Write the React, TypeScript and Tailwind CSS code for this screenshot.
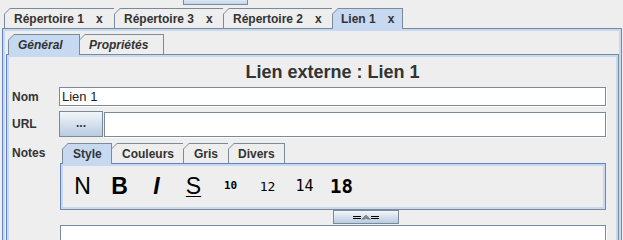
import React from 'react'

const SANS = "font-['Liberation_Sans',Arial,sans-serif]"
const MONO = "font-['DejaVu_Sans_Mono',monospace]"

function Corner() {
  return (
    <svg className="absolute -left-px -top-px" width="7" height="7" viewBox="0 0 7 7">
      <polygon points="0,0 6.5,0 0,6.5" fill="#eeeeee" />
      <line x1="0" y1="6.5" x2="6.5" y2="0" stroke="#7a8a99" strokeWidth="1" />
    </svg>
  )
}

function Tab({ label, sel, cls, italic, close }: { label: string; sel?: boolean; cls: string; italic?: boolean; close?: string }) {
  return (
    <div
      className={`relative -ml-px flex items-center border border-b-0 border-[#7a8a99] text-[12px] font-bold text-[#333333] ${
        sel ? 'z-10 -mb-px h-[21px] bg-[#c6d9f0]' : 'h-[20px] bg-[#eeeeee]'
      } ${italic ? 'italic' : ''} ${cls}`}
    >
      <Corner />
      <span>{label}</span>
      {close && <span className={`${close}`}>x</span>}
    </div>
  )
}

function Field({ cls, children }: { cls: string; children?: React.ReactNode }) {
  return (
    <div className={`flex items-center border border-[#7a8a99] bg-white shadow-[1px_1px_0_#ffffff] ${cls}`}>{children}</div>
  )
}

export default function App() {
  return (
    <div className={`relative h-[240px] w-[623px] overflow-hidden bg-[#eeeeee] ${SANS}`}>
      {/* strip above the tabs */}
      <div className="flex h-[6px]">
        <div className="ml-[183px] h-[5px] w-[65px] border-x border-b border-[#7a8a99] bg-linear-to-b from-[#dde8f3] to-[#c3d5e8]" />
      </div>

      {/* outer tabs */}
      <div className="ml-[5px] mt-[2px] flex items-end">
        <Tab label="Répertoire 1" cls="w-[111px] pl-[9px]" close="ml-[12px]" />
        <Tab label="Répertoire 3" cls="w-[110px] pl-[9px]" close="ml-[12px]" />
        <Tab label="Répertoire 2" cls="w-[110px] pl-[9px]" close="ml-[12px]" />
        <Tab label="Lien 1" sel cls="w-[71px] pl-[8px]" close="ml-[12px]" />
      </div>

      {/* outer content */}
      <div className="ml-[2px] w-[620px] border border-[#7a8a99] border-l-[#6382bf]">
        <div className="h-[260px] border-2 border-[#c6d9f0] pl-px">
          {/* inner tabs */}
          <div className="ml-[3px] mt-[3px] flex items-end">
            <Tab label="Général" sel italic cls="w-[72px] pl-[9px]" />
            <Tab label="Propriétés" italic cls="w-[85px] pl-[9px]" />
          </div>
          <div className="w-[613px] border border-[#7a8a99] border-l-[#6382bf]">
            <div className="h-[200px] border-2 border-[#c6d9f0]">
              {/* title */}
              <div className="mt-[4px] flex h-[23px] items-center">
                <div className="w-[50px]" />
                <div className="flex-1 pr-[10px] text-center text-[18px] font-bold text-[#333333]">Lien externe : Lien 1</div>
              </div>

              {/* Nom */}
              <div className="mt-[3px] flex h-[19px] items-center">
                <div className="w-[50px] pl-[3px] text-[12px] font-bold text-[#333333]">Nom</div>
                <Field cls="mr-[10px] h-[19px] flex-1 pl-[2px] text-[13px] text-[#222222]">Lien 1</Field>
              </div>

              {/* URL */}
              <div className="mt-[5px] flex h-[26px] items-center">
                <div className="w-[50px] pl-[3px] text-[12px] font-bold text-[#333333]">URL</div>
                <div className="flex h-[26px] w-[44px] items-center justify-center border border-[#7a8a99] bg-linear-to-b from-[#f2f6fa] to-[#b9cce1] pb-[2px] text-[12px] font-bold text-[#333333]">
                  ...
                </div>
                <Field cls="ml-px mr-[10px] h-[25px] flex-1" />
              </div>

              {/* Notes */}
              <div className="mt-[6px] flex">
                <div className="w-[51px] pl-[3px] pt-px text-[12px] font-bold text-[#333333]">Notes</div>
                <div className="mr-[10px] flex-1">
                  <div className="ml-[3px] flex items-end">
                    <Tab label="Style" sel cls="w-[50px] pl-[10px]" />
                    <Tab label="Couleurs" cls="w-[73px] pl-[10px]" />
                    <Tab label="Gris" cls="w-[46px] pl-[10px]" />
                    <Tab label="Divers" cls="w-[57px] pl-[9px]" />
                  </div>
                  <div className="h-[47px] border border-[#7a8a99] border-t-[#6382bf] border-l-[#6382bf]">
                    <div className="flex h-full items-center border-2 border-[#c6d9f0] pl-px text-black">
                      <div className="w-[37px] text-center text-[23px] leading-none">N</div>
                      <div className="w-[37px] text-center text-[23px] font-bold leading-none">B</div>
                      <div className="w-[37px] text-center text-[23px] font-bold italic leading-none">I</div>
                      <div className="w-[37px] text-center text-[23px] leading-none underline decoration-1 underline-offset-2">S</div>
                      <div className={`w-[37px] text-center text-[11px] font-bold ${MONO}`}>10</div>
                      <div className={`w-[37px] text-center text-[13px] ${MONO}`}>12</div>
                      <div className={`w-[37px] text-center text-[15px] ${MONO}`}>14</div>
                      <div className={`w-[37px] text-center text-[19px] font-bold ${MONO}`}>18</div>
                    </div>
                  </div>
                  <div className="flex h-[15px]">
                    <div className="ml-[273px] flex h-[14px] w-[66px] items-center justify-center border border-[#7a8a99] bg-linear-to-b from-[#f2f6fa] to-[#b9cce1]">
                      <svg width="26" height="5" viewBox="0 0 26 5">
                        <path d="M0 1.5h8M0 3.5h8M18 1.5h8M18 3.5h8" stroke="#000" strokeWidth="1" />
                        <path d="M9 4.5L13 0.5L17 4.5M11 4.5L13 2.5L15 4.5" stroke="#000" strokeWidth="0.8" fill="none" />
                      </svg>
                    </div>
                  </div>
                  <Field cls="h-[40px]" />
                </div>
              </div>
            </div>
          </div>
        </div>
      </div>
    </div>
  )
}
